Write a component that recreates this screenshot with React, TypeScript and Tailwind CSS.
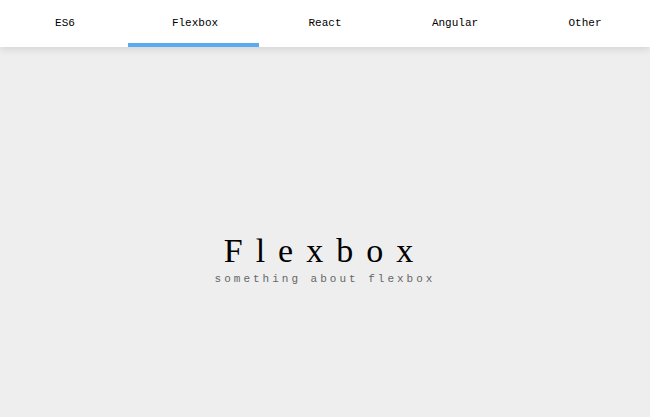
const tabs = ['ES6', 'Flexbox', 'React', 'Angular', 'Other'];

export default function App() {
  const active = 'Flexbox';
  return (
    <div className="flex h-[417px] w-[650px] flex-col bg-[#eeeeee]">
      <nav className="relative z-10 flex h-[47px] bg-white shadow-[0_2px_8px_rgba(0,0,0,0.12)]">
        {tabs.map((t) => (
          <div key={t} className="relative flex flex-1 items-center justify-center">
            <span className="font-['Liberation_Mono',monospace] text-[11px] text-black">{t}</span>
            {t === active && (
              <span className="absolute bottom-0 left-[-2px] right-[1px] h-[4px] bg-[#5aabef]" />
            )}
          </div>
        ))}
      </nav>
      <main className="flex flex-1 flex-col items-center pt-[184px]">
        <h1 className="font-['Liberation_Serif',serif] text-[34px] leading-[40px] tracking-[13px] text-black">
          Flexbox
        </h1>
        <p className="mt-[1px] font-['Liberation_Mono',monospace] text-[11px] leading-[14px] tracking-[3px] text-[#666666]">
          something about flexbox
        </p>
      </main>
    </div>
  );
}
